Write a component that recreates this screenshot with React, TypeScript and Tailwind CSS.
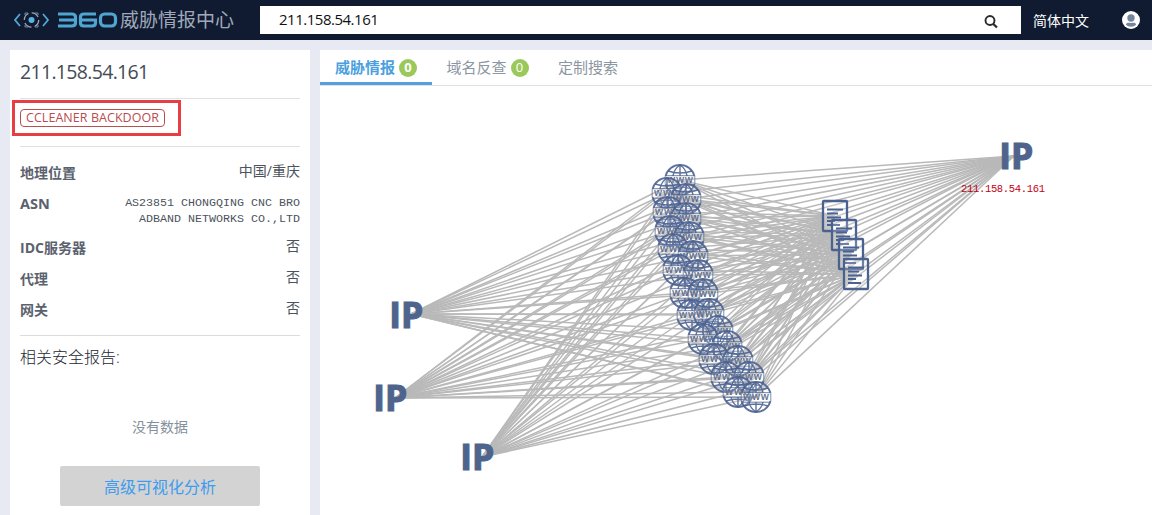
const ips = [
  { x: 1016, y: 156, ax: 1014, ay: 156 },
  { x: 406, y: 315, ax: 411, ay: 314 },
  { x: 390, y: 398, ax: 395, ay: 398 },
  { x: 477, y: 457, ax: 482, ay: 457 },
];

const globes: [number, number][] = [
  [680, 180], [667, 193], [686, 199], [668, 212], [686, 218], [670, 231], [689, 237],
  [673, 249], [693, 256], [678, 270], [698, 275], [685, 293], [703, 294], [692, 315],
  [709, 314], [718, 331], [703, 339], [727, 346], [714, 359], [738, 361], [726, 377],
  [749, 377], [738, 392], [756, 397],
];

const docs: [number, number][] = [[835, 216], [844, 235], [851, 254], [856, 274]];

function Globe({ x, y }: { x: number; y: number }) {
  return (
    <g transform={`translate(${x} ${y})`} fill="none" stroke="#4b6290" strokeOpacity="0.9" strokeWidth="1.4">
      <circle r="15" fill="#fff" fillOpacity="0.2" stroke="none" />
      <path d="M-14.5-4A15 15 0 0 1 14.5-4M-14.5 4A15 15 0 0 0 14.5 4" strokeWidth="1.8" />
      <path d="M-14.8-4v8M14.8-4v8" strokeWidth="0.8" />
      <path d="M0-15V-4M0 5V15M-12-9Q0-5 12-9M-12 9Q0 5 12 9M-7-4Q-6-11 0-15Q6-11 7-4M-7 5Q-6 11 0 15Q6 11 7 5" />
      <path d="M-14-4.3H14M-14 5.2H14" strokeWidth="0.9" />
      <text x="-13" y="3.2" textLength="26" fontSize="10" fill="#5b6c8c" stroke="none" fontFamily="Open Sans, sans-serif" fontWeight="600">www</text>
    </g>
  );
}

function Doc({ x, y }: { x: number; y: number }) {
  return (
    <g transform={`translate(${x} ${y})`} fill="none" stroke="#4b6290" strokeWidth="2">
      <rect x="-12" y="-15" width="24" height="30" rx="0.8" fill="#fff" fillOpacity="0.2" strokeWidth="2.3" />
      <path d="M-8-6.5H8M-8-2.5H3M-8 1.5H6M-8 5H0M-8 9H5" strokeWidth="1.8" />
    </g>
  );
}

function Graph() {
  return (
    <svg className="block h-[429px] w-[832px]" viewBox="320 86 832 429">
      <g stroke="#b9b9b9" strokeWidth="1.5">
        {globes.map(([gx, gy]) =>
          ips.map((p) => <line key={`${gx}-${gy}-${p.x}`} x1={gx} y1={gy} x2={p.ax} y2={p.ay} />),
        )}
        {globes.map(([gx, gy]) =>
          docs.map(([dx, dy]) => <line key={`${gx}-${gy}-${dx}`} x1={gx} y1={gy} x2={dx} y2={dy} />),
        )}
      </g>
      {globes.map(([x, y]) => <Globe key={`${x}-${y}`} x={x} y={y} />)}
      {docs.map(([x, y]) => <Doc key={x} x={x} y={y} />)}
      {ips.map((p) => (
        <text key={p.x} x={p.x + 0.3} y={p.y + 12.5} textAnchor="middle" textLength="34" lengthAdjust="spacingAndGlyphs" fontSize="35" fontWeight="700" fill="#4f648d" stroke="#4f648d" strokeWidth="1.2" fontFamily="Open Sans, sans-serif">IP</text>
      ))}
      <text x="961" y="192" fontSize="10.5" textLength="84" fill="#c40010" fontFamily="Liberation Mono, monospace">211.158.54.161</text>
    </svg>
  );
}

function Logo() {
  return (
    <div className="flex w-[260px] shrink-0 items-center pl-[13px]">
      <svg className="h-[22px] w-[37px]" viewBox="0 0 37 22" fill="none">
        <path d="M7 5L2 11L7 17M30 5L35 11L30 17" stroke="#54a8d4" strokeWidth="1.8" />
        <circle cx="18.5" cy="11" r="7.2" stroke="#9aaabd" strokeWidth="1.3" strokeDasharray="8 3.3" />
        <path d="M12 6V4H15M22 4h3v2M12 16v2h3M22 18h3v-2" stroke="#77899e" />
        <circle cx="18.5" cy="11" r="3" fill="#55b4e4" />
      </svg>
      <svg className="ml-2 h-[18px] w-[60px]" viewBox="0 0 60 18" fill="none" stroke="#4fa5d2" strokeWidth="3.2">
        <path d="M0 3H13.5Q17.5 3 17.5 6V12Q17.5 15 13.5 15H0M1 9H17" />
        <path d="M38 3H26Q22.5 3 22.5 6V12Q22.5 15 26 15H34Q37.5 15 37.5 12V9H23" />
        <rect x="42.5" y="3" width="15" height="12" rx="4" />
      </svg>
      <span className="ml-[2px] whitespace-nowrap text-[19px] leading-[40px] text-[#a0a9ba]">威胁情报中心</span>
    </div>
  );
}

function Row({ label, value, className }: { label: string; value: string; className: string }) {
  return (
    <div className={`flex justify-between text-[14px] leading-[20px] ${className}`}>
      <span className="font-bold text-[#5b626e]">{label}</span>
      <span className="-mt-[2px] text-[#4c535d]">{value}</span>
    </div>
  );
}

function Badge() {
  return <span className="ml-1 flex h-[18px] w-[18px] items-center justify-center rounded-full bg-[#9ac95a] text-[13px] text-white">0</span>;
}

export default function App() {
  return (
    <div className="flex h-[515px] w-[1152px] flex-col overflow-hidden bg-[#e7eaf2] font-['Open_Sans','Noto_Sans_CJK_SC',sans-serif]">
      <header className="flex h-10 shrink-0 items-center bg-[#101b31]">
        <Logo />
        <div className="flex h-7 w-[761px] items-center justify-between bg-white pl-[19px] pr-[22px] text-[15px] tracking-[-0.49px] text-[#111]">
          <span className="-mt-[2px]">211.158.54.161</span>
          <svg className="mt-[3px] h-4 w-4" viewBox="0 0 16 16" fill="none" stroke="#2b2b2b">
            <circle cx="7" cy="6.5" r="4.5" strokeWidth="1.9" />
            <path d="M10.3 10L14 13.5" strokeWidth="2.3" />
          </svg>
        </div>
        <span className="ml-3 text-[14px] text-white">简体中文</span>
        <svg className="ml-[33px] h-[18px] w-[18px]" viewBox="0 0 18 18">
          <circle cx="9" cy="9" r="9" fill="#fff" />
          <circle cx="9" cy="7" r="3.7" fill="#75859b" />
          <path d="M3.8 13.5C5.5 11 6.5 12 9 12S12.5 11 14.2 13.5C11.5 16.5 6.5 16.5 3.8 13.5Z" fill="#75859b" />
        </svg>
      </header>
      <main className="flex min-h-0 flex-1 gap-[10px] pl-[10px] pt-[10px]">
        <aside className="w-[300px] shrink-0 bg-white px-[10px]">
          <h1 className="h-[48px] pt-[8px] text-[19.5px] leading-[28px] tracking-[-0.68px] text-[#454b54]">211.158.54.161</h1>
          <div className="h-[48px] border-t border-[#dfe1e4]">
            <div className="-ml-2 mt-px flex h-[36px] w-[169px] items-center border-[3px] border-[#e63e44] pl-[5px]">
              <span className="flex h-[18px] w-[145px] items-center justify-center whitespace-nowrap rounded-[4px] border border-[#b9504e] pt-px text-[12.5px] tracking-[0.05px] text-[#b84c4e]">CCLEANER BACKDOOR</span>
            </div>
          </div>
          <div className="h-[189px] border-t border-[#dfe1e4] pt-4">
            <Row label="地理位置" value="中国/重庆" className="h-[31px]" />
            <div className="flex h-[44px] justify-between">
              <span className="text-[14.5px] font-bold leading-[20px] text-[#5b626e]">ASN</span>
              <p className="pt-[1px] text-right font-['Liberation_Mono',monospace] text-[11.67px] leading-[16px] text-[#4c535d]">AS23851 CHONGQING CNC BRO<br />ADBAND NETWORKS CO.,LTD</p>
            </div>
            <Row label="IDC服务器" value="否" className="h-[31px]" />
            <Row label="代理" value="否" className="h-[31px]" />
            <Row label="网关" value="否" className="h-[31px]" />
          </div>
          <div className="border-t border-[#d9dbde] pt-[9px]">
            <h2 className="text-[16px] font-light leading-[24px] text-[#222831]">相关安全报告:</h2>
            <p className="mt-[48px] text-center text-[14px] leading-[20px] text-[#84919d]">没有数据</p>
            <button className="mx-auto mt-[29px] flex h-10 w-[200px] items-center justify-center rounded-[2px] bg-[#d3d3d3] pt-[2px] text-[16px] text-[#409bee]">高级可视化分析</button>
          </div>
        </aside>
        <section className="flex w-[832px] flex-col bg-white">
          <nav className="flex h-[36px] shrink-0 border-b border-[#dfe2e5] text-[15px] text-[#8b96a1]">
            <div className="flex h-[35px] w-[112px] items-center justify-center border-b-[3px] border-[#55a0dc] pt-[3px] font-bold text-[#4b9fdf]">威胁情报<Badge /></div>
            <div className="flex h-[35px] w-[111px] items-center justify-center">域名反查<Badge /></div>
            <div className="flex h-[35px] items-center pl-[15px]">定制搜索</div>
          </nav>
          <Graph />
        </section>
      </main>
    </div>
  );
}
